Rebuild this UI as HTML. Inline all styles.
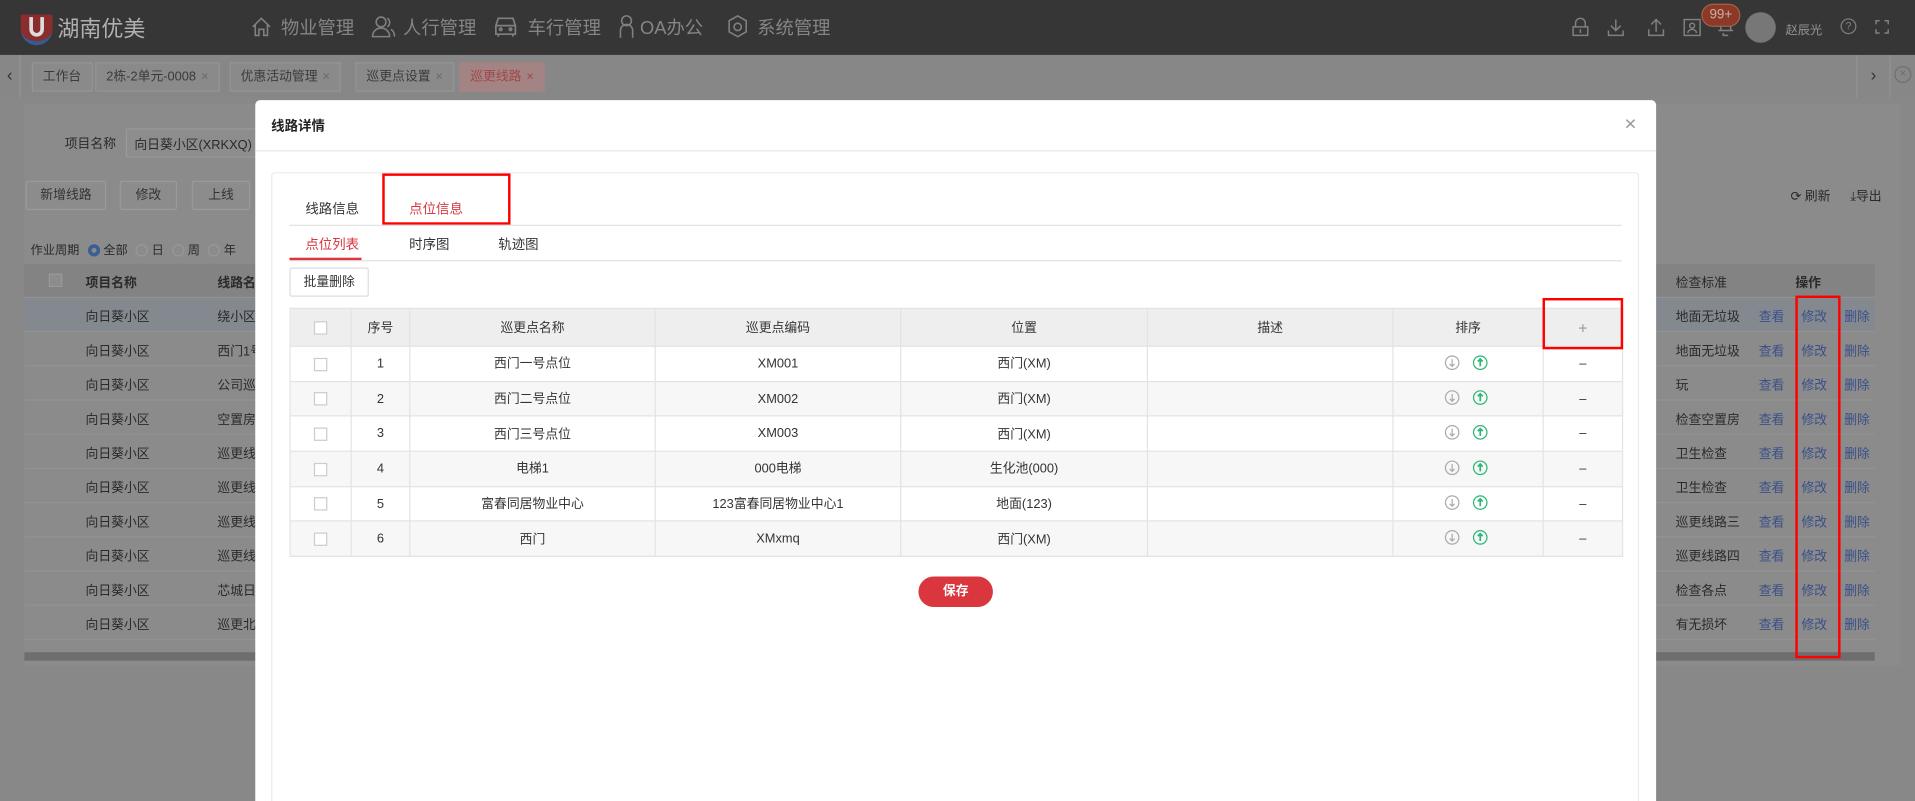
<!DOCTYPE html>
<html><head><meta charset="utf-8">
<style>
*{margin:0;padding:0;box-sizing:border-box}
html,body{width:1915px;height:801px;overflow:hidden;background:#8a8a8a}
#w{width:1568px;height:656px;transform:scale(1.22133);transform-origin:0 0;position:relative;font-family:"Liberation Sans","Noto Sans CJK SC",sans-serif;font-size:11px;color:#333;background:#888;overflow:hidden}
.a{position:absolute}
.hd{left:0;top:0;width:1568px;height:45px;background:#363636}
.nav{color:#858585;font-size:15px;top:12px}
.tab{top:51px;height:24px;border:1px solid #959595;background:#8a8a8a;color:#3a3a3a;line-height:22px;padding:0 8px;font-size:10.5px;white-space:nowrap}
.tab i{font-style:normal;color:#6a6a6a;margin-left:4px}
.btn{height:24px;border:1px solid #9a9a9a;border-radius:2px;background:#8c8c8c;color:#333;line-height:22px;text-align:center;font-size:10.5px}
.br{left:20px;width:1515px;height:28px;border-bottom:1px solid #939393;font-size:10.5px;color:#2a2a2a}
.br span{position:absolute;top:8px;white-space:nowrap}
.op{color:#3a4f8a}
.modal{left:209px;top:82px;width:1147px;height:600px;background:#fff;border-radius:4px}
table{border-collapse:collapse;position:absolute;left:237px;top:252px;width:1092px;font-size:10.5px;color:#333}
td,th{border:1px solid #e3e3e3;text-align:center;height:28.7px;font-weight:normal}
th{background:#eeeeee;height:31px;color:#333}
tr:nth-child(odd) td{background:#f7f7f7}
.cb{display:inline-block;width:11px;height:11px;border:1px solid #ccc;background:#fff;vertical-align:middle}
.rb{border:2px solid #f00;position:absolute}
</style></head><body><div id="w">
<div class="a hd"></div>
<svg class="a" style="left:15px;top:10px" width="30" height="28" viewBox="0 0 30 28"><path d="M2 2h26v12a13 13 0 0 1-26 0z" fill="#8b2d2d"/><path d="M2 14a13 13 0 0 0 26 0 12 9 0 0 1-26 0z" fill="#2e5e9a"/><path d="M9 4v10a6 6 0 0 0 12 0V4h-3v10a3 3 0 0 1-6 0V4z" fill="#ddd"/></svg>
<div class="a" style="left:47px;top:10px;font-size:18px;color:#b0b0b0">湖南优美</div>
<svg class="a" style="left:205px;top:13px" width="18" height="18" viewBox="0 0 18 18" fill="none" stroke="#808080" stroke-width="1.3"><path d="M2 9L9 2l7 7M4 7v9h3v-5h4v5h3V7"/></svg>
<div class="a nav" style="left:230px">物业管理</div>
<svg class="a" style="left:304px;top:12px" width="20" height="20" viewBox="0 0 20 20" fill="none" stroke="#808080" stroke-width="1.3"><circle cx="8" cy="6" r="4"/><path d="M1 18c0-4 3-7 7-7s7 3 7 7zM13 3a4 4 0 0 1 0 7M16 12c2 1 3 3 3 6"/></svg>
<div class="a nav" style="left:330px">人行管理</div>
<svg class="a" style="left:404px;top:13px" width="20" height="18" viewBox="0 0 20 18" fill="none" stroke="#808080" stroke-width="1.4"><path d="M4 2h12l2 6v7H2V8zM2 8h16M4 15v2M16 15v2"/><circle cx="6" cy="11" r="1"/><circle cx="14" cy="11" r="1"/></svg>
<div class="a nav" style="left:432px">车行管理</div>
<svg class="a" style="left:506px;top:12px" width="14" height="20" viewBox="0 0 14 20" fill="none" stroke="#808080" stroke-width="1.3"><circle cx="7" cy="5" r="4"/><path d="M2 19V13a5 5 0 0 1 10 0v6"/></svg>
<div class="a nav" style="left:524px">OA办公</div>
<svg class="a" style="left:595px;top:12px" width="18" height="20" viewBox="0 0 18 20" fill="none" stroke="#808080" stroke-width="1.3"><path d="M9 1l7 4v9l-7 4-7-4V5z"/><circle cx="9" cy="10" r="3"/></svg>
<div class="a nav" style="left:620px">系统管理</div>
<svg class="a" style="left:1286px;top:14px" width="140" height="16" viewBox="0 0 140 16" fill="none" stroke="#808080" stroke-width="1.2"><path d="M2 8h12v7H2zM4 8V5a4 4 0 0 1 8 0v3M8 10v3"/><path d="M37 2v9M33 7l4 4 4-4M31 11v4h12v-4"/><path d="M70 12V2M66 6l4-4 4 4M64 10v5h12v-5"/><rect x="93" y="2" width="13" height="13"/><circle cx="99.5" cy="7" r="2"/><path d="M96 13a3.5 3 0 0 1 7 0"/><path d="M123 5a4 4 0 0 1 8 0v6h2H121h2zM125 13v2h4"/></svg>
<div class="a" style="left:1393px;top:3px;width:32px;height:19px;border-radius:10px;background:#8c3a26;border:1px solid #a06050;color:#c9b0aa;font-size:11px;text-align:center;line-height:17px">99+</div>
<div class="a" style="left:1429px;top:10px;width:25px;height:25px;border-radius:50%;background:#777"></div>
<div class="a" style="left:1462px;top:16px;color:#959595;font-size:10px">赵辰光</div>
<div class="a" style="left:1507px;top:15px;width:13px;height:13px;border:1px solid #808080;border-radius:50%;color:#808080;font-size:9px;text-align:center;line-height:11px">?</div>
<svg class="a" style="left:1535px;top:16px" width="12" height="12" viewBox="0 0 12 12" fill="none" stroke="#808080" stroke-width="1.2"><path d="M1 4V1h3M8 1h3v3M11 8v3H8M4 11H1V8"/></svg>
<div class="a" style="left:0;top:45px;width:1568px;height:35px;background:#878787"></div>
<div class="a" style="left:0;top:45px;width:17px;height:35px;border-right:1px solid #939393;color:#333;font-size:14px;text-align:center;line-height:33px">‹</div>
<div class="a tab" style="left:26px">工作台</div>
<div class="a tab" style="left:78px">2栋-2单元-0008<i>×</i></div>
<div class="a tab" style="left:188px">优惠活动管理<i>×</i></div>
<div class="a tab" style="left:291px">巡更点设置<i>×</i></div>
<div class="a tab" style="left:376px;background:#a38383;border-color:#a38383;color:#a14848">巡更线路<i style="color:#a14848">×</i></div>
<div class="a" style="left:1520px;top:45px;width:28px;height:35px;border-left:1px solid #939393;border-right:1px solid #939393;color:#333;font-size:14px;text-align:center;line-height:33px">›</div>
<div class="a" style="left:1551px;top:54px;width:14px;height:14px;border:1px solid #6f6f6f;border-radius:50%;color:#6f6f6f;font-size:10px;text-align:center;line-height:12px">×</div>
<div class="a" style="left:20px;top:85px;width:1536px;height:460px;background:#8b8b8b"></div>
<div class="a" style="left:53px;top:110px;color:#2a2a2a;font-size:10.5px">项目名称</div>
<div class="a" style="left:103px;top:105px;width:110px;height:24px;border:1px solid #9a9a9a;border-radius:2px;background:#8d8d8d;padding:5px 6px;font-size:10.5px;color:#2a2a2a;white-space:nowrap;overflow:hidden">向日葵小区(XRKXQ)</div>
<div class="a btn" style="left:21px;top:148px;width:66px">新增线路</div>
<div class="a btn" style="left:98px;top:148px;width:47px">修改</div>
<div class="a btn" style="left:157px;top:148px;width:48px">上线</div>
<div class="a" style="left:1466px;top:153px;color:#2a2a2a;font-size:10.5px">⟳ 刷新</div>
<div class="a" style="left:1515px;top:153px;color:#2a2a2a;font-size:10.5px">⤓导出</div>
<div class="a" style="left:25px;top:196px;color:#2a2a2a;font-size:10px">作业周期 <span style="display:inline-block;width:10px;height:10px;border:3px solid #3b5f95;border-radius:50%;vertical-align:middle;margin-left:4px"></span> 全部 <span style="display:inline-block;width:10px;height:10px;border:1px solid #999;border-radius:50%;vertical-align:middle;margin-left:4px"></span> 日 <span style="display:inline-block;width:10px;height:10px;border:1px solid #999;border-radius:50%;vertical-align:middle;margin-left:4px"></span> 周 <span style="display:inline-block;width:10px;height:10px;border:1px solid #999;border-radius:50%;vertical-align:middle;margin-left:4px"></span> 年</div>
<div class="a br" style="top:216px;background:#838383"><span style="left:20px;top:8px;width:11px;height:11px;border:1px solid #999;background:#8c8c8c"></span><span style="left:50px;font-weight:bold">项目名称</span><span style="left:158px;font-weight:bold">线路名称</span><span style="left:1352px">检查标准</span><span style="left:1450px;font-weight:bold">操作</span></div>
<div class="a br" style="top:244px;background:#848990"><span style="left:50px">向日葵小区</span><span style="left:158px">绕小区一</span><span style="left:1352px">地面无垃圾</span><span class="op" style="left:1420px">查看</span><span class="op" style="left:1455px">修改</span><span class="op" style="left:1490px">删除</span></div>
<div class="a br" style="top:272px"><span style="left:50px">向日葵小区</span><span style="left:158px">西门1号</span><span style="left:1352px">地面无垃圾</span><span class="op" style="left:1420px">查看</span><span class="op" style="left:1455px">修改</span><span class="op" style="left:1490px">删除</span></div>
<div class="a br" style="top:300px"><span style="left:50px">向日葵小区</span><span style="left:158px">公司巡更</span><span style="left:1352px">玩</span><span class="op" style="left:1420px">查看</span><span class="op" style="left:1455px">修改</span><span class="op" style="left:1490px">删除</span></div>
<div class="a br" style="top:328px"><span style="left:50px">向日葵小区</span><span style="left:158px">空置房巡</span><span style="left:1352px">检查空置房</span><span class="op" style="left:1420px">查看</span><span class="op" style="left:1455px">修改</span><span class="op" style="left:1490px">删除</span></div>
<div class="a br" style="top:356px"><span style="left:50px">向日葵小区</span><span style="left:158px">巡更线路</span><span style="left:1352px">卫生检查</span><span class="op" style="left:1420px">查看</span><span class="op" style="left:1455px">修改</span><span class="op" style="left:1490px">删除</span></div>
<div class="a br" style="top:384px"><span style="left:50px">向日葵小区</span><span style="left:158px">巡更线路</span><span style="left:1352px">卫生检查</span><span class="op" style="left:1420px">查看</span><span class="op" style="left:1455px">修改</span><span class="op" style="left:1490px">删除</span></div>
<div class="a br" style="top:412px"><span style="left:50px">向日葵小区</span><span style="left:158px">巡更线路</span><span style="left:1352px">巡更线路三</span><span class="op" style="left:1420px">查看</span><span class="op" style="left:1455px">修改</span><span class="op" style="left:1490px">删除</span></div>
<div class="a br" style="top:440px"><span style="left:50px">向日葵小区</span><span style="left:158px">巡更线路</span><span style="left:1352px">巡更线路四</span><span class="op" style="left:1420px">查看</span><span class="op" style="left:1455px">修改</span><span class="op" style="left:1490px">删除</span></div>
<div class="a br" style="top:468px"><span style="left:50px">向日葵小区</span><span style="left:158px">芯城日常</span><span style="left:1352px">检查各点</span><span class="op" style="left:1420px">查看</span><span class="op" style="left:1455px">修改</span><span class="op" style="left:1490px">删除</span></div>
<div class="a br" style="top:496px"><span style="left:50px">向日葵小区</span><span style="left:158px">巡更北门</span><span style="left:1352px">有无损坏</span><span class="op" style="left:1420px">查看</span><span class="op" style="left:1455px">修改</span><span class="op" style="left:1490px">删除</span></div>
<div class="a" style="left:20px;top:534px;width:1515px;height:7px;background:#6e6e6e"></div>
<div class="rb" style="left:1470px;top:242px;width:37px;height:297px"></div>
<div class="a modal"></div>
<div class="a" style="left:222px;top:95px;font-weight:bold;font-size:11px;color:#222">线路详情</div>
<div class="a" style="left:1330px;top:92px;font-size:17px;color:#999">×</div>
<div class="a" style="left:209px;top:123px;width:1147px;height:1px;background:#e8e8e8"></div>
<div class="a" style="left:222px;top:141px;width:1120px;height:530px;border:1px solid #ececec;border-radius:3px"></div>
<div class="a" style="left:250px;top:163px;font-size:11px">线路信息</div>
<div class="a" style="left:335px;top:163px;font-size:11px;color:#d9363e">点位信息</div>
<div class="rb" style="left:313px;top:142px;width:105px;height:42px"></div>
<div class="a" style="left:237px;top:184px;width:1091px;height:1px;background:#e2e2e2"></div>
<div class="a" style="left:250px;top:192px;font-size:11px;color:#d9363e">点位列表</div>
<div class="a" style="left:335px;top:192px;font-size:11px">时序图</div>
<div class="a" style="left:408px;top:192px;font-size:11px">轨迹图</div>
<div class="a" style="left:237px;top:213px;width:1091px;height:1px;background:#e2e2e2"></div>
<div class="a" style="left:237px;top:211px;width:59px;height:2px;background:#d9363e"></div>
<div class="a" style="left:237px;top:219px;width:65px;height:24px;border:1px solid #ddd;border-radius:2px;font-size:10.5px;text-align:center;line-height:22px">批量删除</div>
<table>
<tr><th style="width:50px"><span class="cb"></span></th><th style="width:48px">序号</th><th style="width:201px">巡更点名称</th><th style="width:201px">巡更点编码</th><th style="width:202px">位置</th><th style="width:201px">描述</th><th style="width:123px">排序</th><th style="color:#999;font-size:13px">+</th></tr>
<tr><td><span class="cb"></span></td><td>1</td><td>西门一号点位</td><td>XM001</td><td>西门(XM)</td><td></td><td></td><td>–</td></tr>
<tr><td><span class="cb"></span></td><td>2</td><td>西门二号点位</td><td>XM002</td><td>西门(XM)</td><td></td><td></td><td>–</td></tr>
<tr><td><span class="cb"></span></td><td>3</td><td>西门三号点位</td><td>XM003</td><td>西门(XM)</td><td></td><td></td><td>–</td></tr>
<tr><td><span class="cb"></span></td><td>4</td><td>电梯1</td><td>000电梯</td><td>生化池(000)</td><td></td><td></td><td>–</td></tr>
<tr><td><span class="cb"></span></td><td>5</td><td>富春同居物业中心</td><td>123富春同居物业中心1</td><td>地面(123)</td><td></td><td></td><td>–</td></tr>
<tr><td><span class="cb"></span></td><td>6</td><td>西门</td><td>XMxmq</td><td>西门(XM)</td><td></td><td></td><td>–</td></tr>
</table>
<svg class="a" style="left:1182px;top:290px" width="40" height="160" viewBox="0 0 40 160" fill="none" stroke-width="1">
<g id="ic"><circle cx="7" cy="7" r="5.5" stroke="#aaa"/><path d="M7 4v6M5 8l2 2 2-2" stroke="#aaa"/><circle cx="30" cy="7" r="5.5" stroke="#2bb673"/><path d="M30 10V4M28 6l2-2 2 2" stroke="#2bb673" stroke-width="1.4"/></g>
<use href="#ic" y="28.5"/><use href="#ic" y="57"/><use href="#ic" y="86"/><use href="#ic" y="114.5"/><use href="#ic" y="143"/>
</svg>
<div class="rb" style="left:1263px;top:244px;width:66px;height:42px"></div>
<div class="a" style="left:752px;top:472px;width:61px;height:25px;border-radius:13px;background:#d9363e;color:#fff;font-weight:bold;text-align:center;line-height:25px;font-size:10.5px">保存</div>
</div></body></html>
